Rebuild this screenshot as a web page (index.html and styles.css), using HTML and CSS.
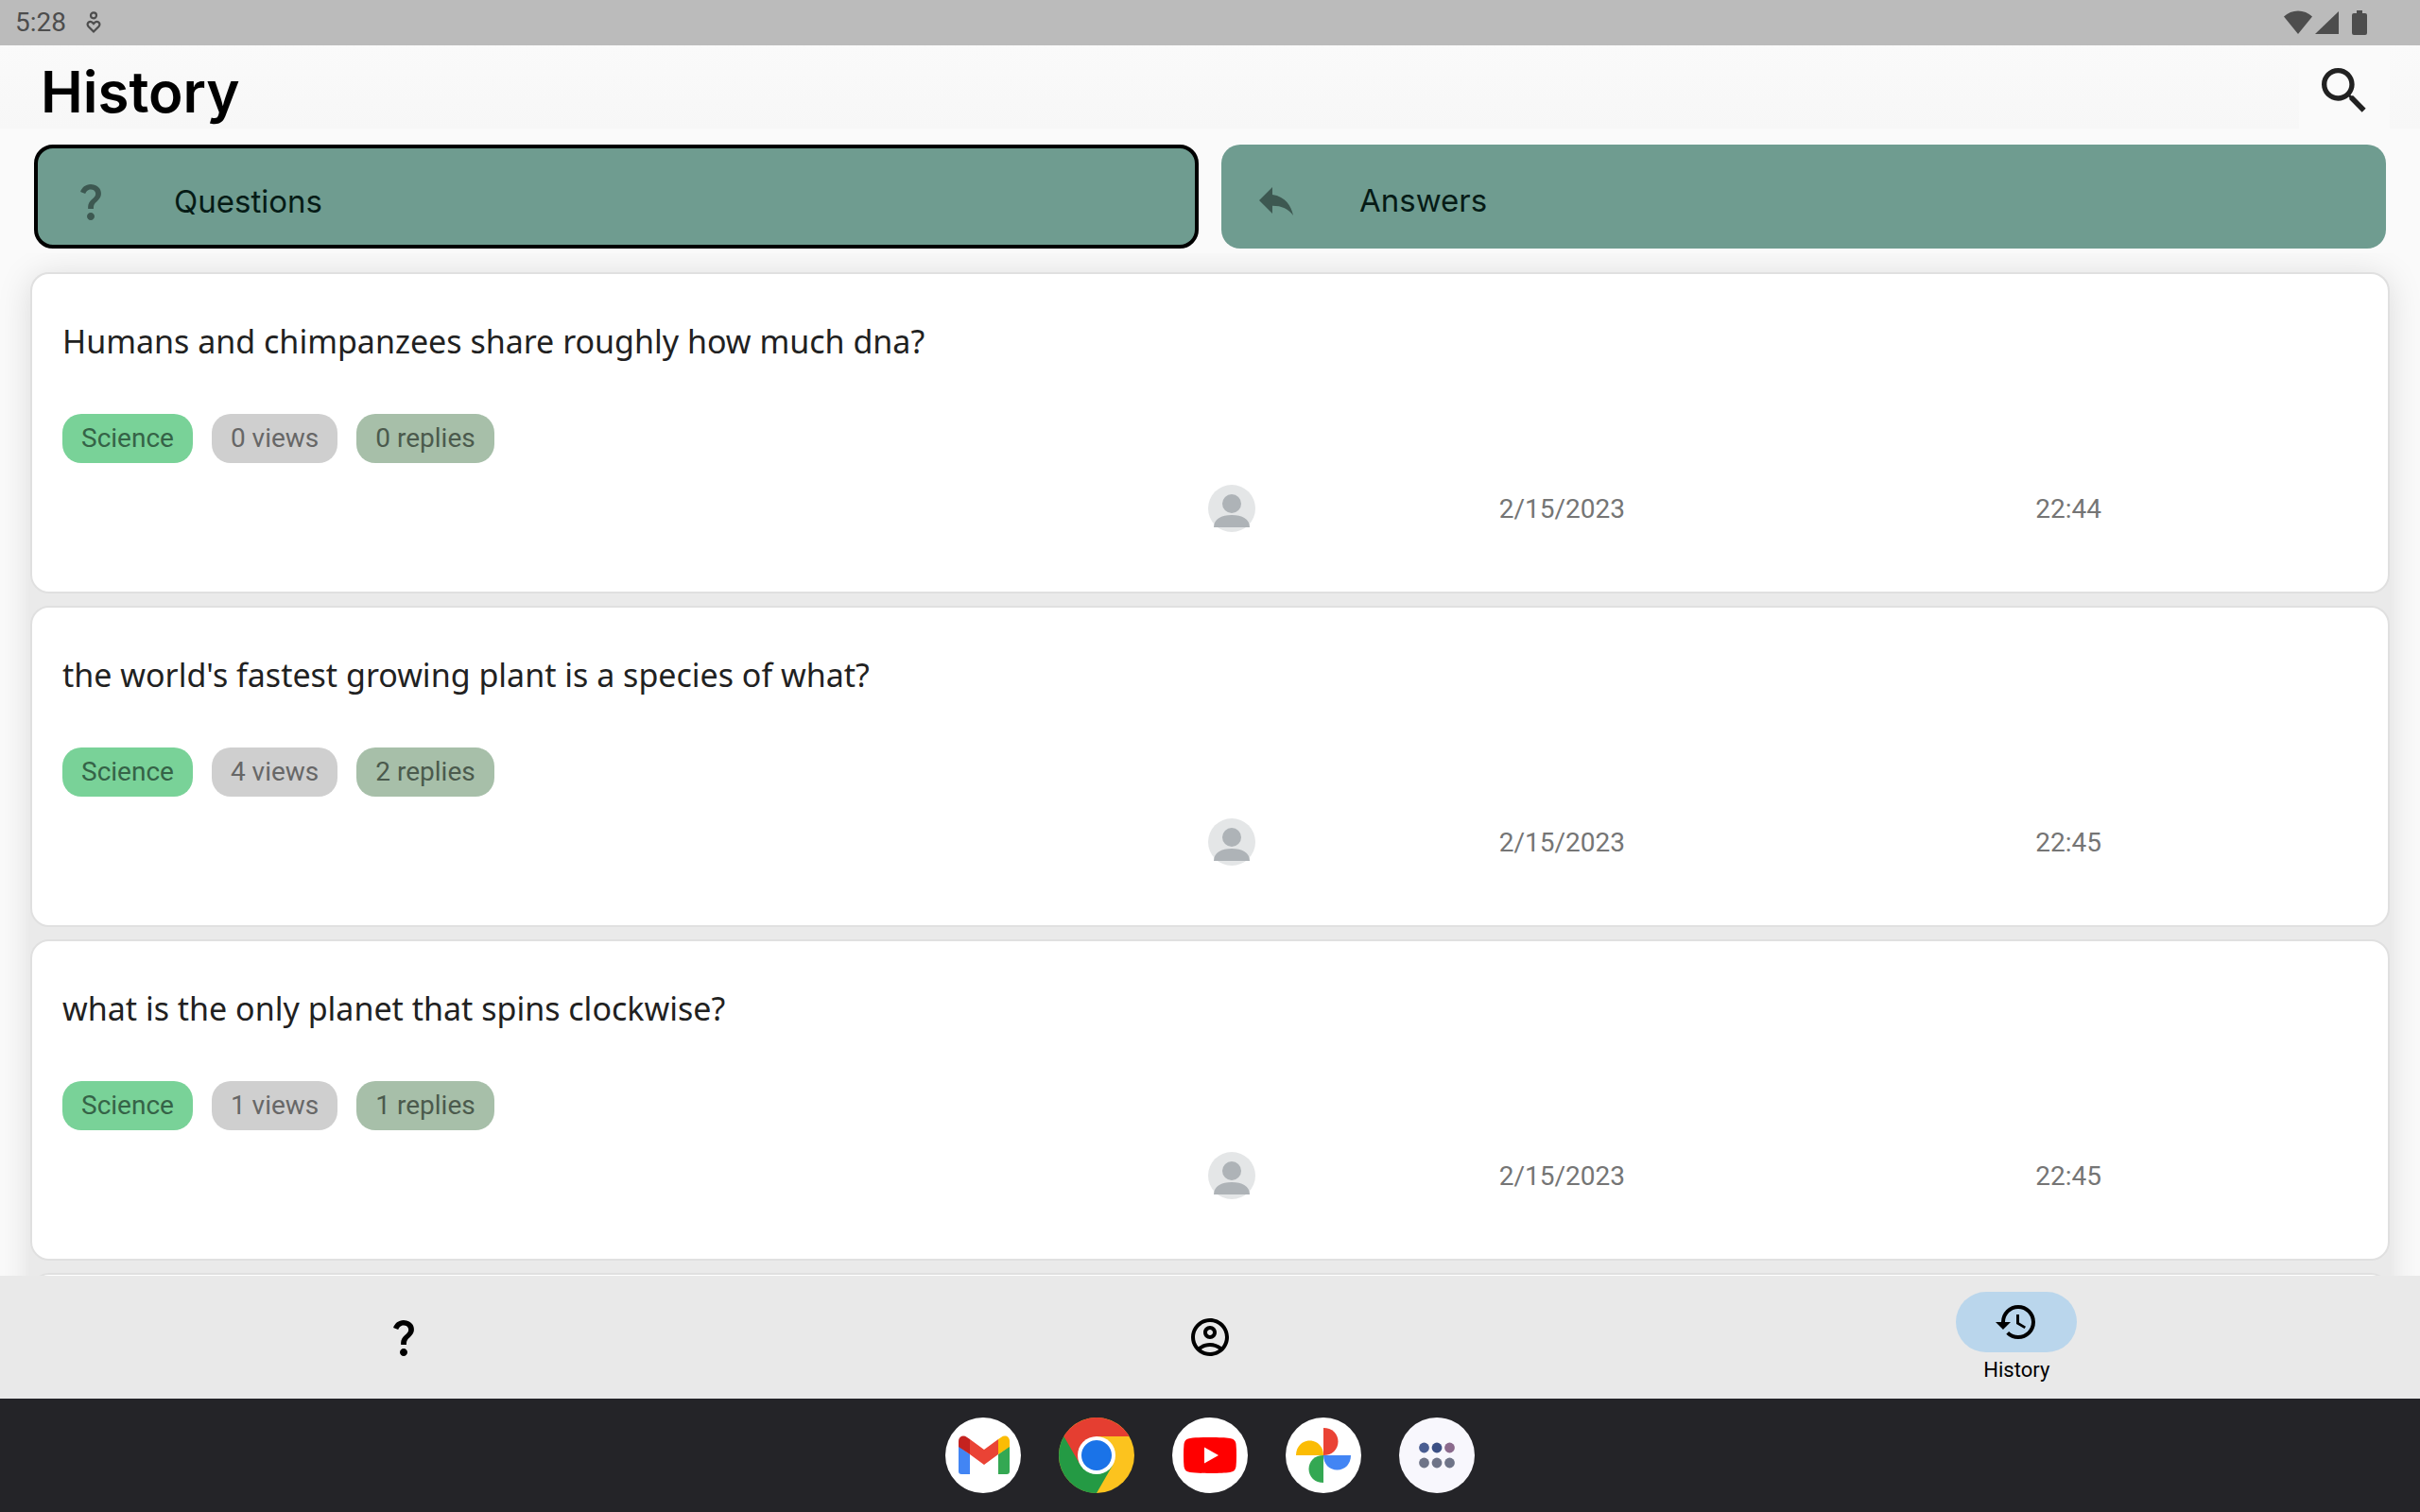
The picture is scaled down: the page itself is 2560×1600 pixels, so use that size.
FILE: index.html
```html
<!DOCTYPE html>
<html lang="en">
<head>
  <meta charset="UTF-8" />
  <meta name="viewport" content="width=device-width, initial-scale=1.0" />
  <title>History</title>
  <link rel="stylesheet" href="styles.css">
</head>
<body>
  <!-- Icons used more than once -->
  <svg class="sprite" aria-hidden="true">
    <symbol id="icon-question" viewBox="0 0 24 24">
      <path d="M11.07 12.85c.77-1.39 2.25-2.21 3.11-3.44.91-1.29.4-3.7-2.18-3.7-1.69 0-2.52 1.28-2.87 2.34L6.54 6.96C7.25 4.83 9.18 3 11.99 3c2.35 0 3.96 1.07 4.78 2.41.7 1.15 1.11 3.3.03 4.9-1.2 1.77-2.35 2.31-2.97 3.45-.25.46-.35.76-.35 2.24h-2.89c-.01-.78-.13-2.05.48-3.15zM14 20c0 1.1-.9 2-2 2s-2-.9-2-2 .9-2 2-2 2 .9 2 2z"/>
    </symbol>
    <symbol id="icon-avatar" viewBox="0 0 50 50">
      <circle cx="25" cy="25" r="25" fill="#e4e6e7"/>
      <circle cx="25" cy="20" r="10" fill="#aeb3b7"/>
      <path d="M6 45c0-9 8-13 19-13s19 4 19 13z" fill="#aeb3b7"/>
    </symbol>
  </svg>

  <div class="status-bar">
    <span class="clock">5:28</span>
    <svg class="status-note" viewBox="0 0 18 24" fill="none" stroke="#4d4d4d" stroke-width="2.2">
      <circle cx="9" cy="4.300" r="3"/>
      <path d="M9 21.500L3.500 16C.5 12.500 5.500 8.500 9 13c3.500-4.500 8.500-.5 5.500 3z"/>
    </svg>
    <div class="status-icons">
      <svg width="30" height="26" viewBox="0 0 30 26"><path d="M0 6.500C8-1.500 22-1.500 30 6.500L15 25z"/></svg>
      <svg width="25" height="26" viewBox="0 0 25 26"><path d="M25 1v24H0z"/></svg>
      <svg class="battery" width="16" height="26" viewBox="0 0 16 26"><path d="M5 0h6v3h3q2 0 2 2v19q0 2-2 2H2q-2 0-2-2V5q0-2 2-2h3z"/></svg>
    </div>
  </div>

  <header class="header">
    <h1>History</h1>
    <button type="button" class="search-btn" aria-label="Search">
      <svg viewBox="0 0 24 24"><path d="M15.500 14h-.79l-.28-.27C15.410 12.590 16 11.110 16 9.500 16 5.910 13.090 3 9.500 3S3 5.910 3 9.500 5.910 16 9.500 16c1.610 0 3.090-.59 4.230-1.570l.27.28v.79l5 4.990L20.490 19l-4.990-5zm-6 0C7.010 14 5 11.990 5 9.500S7.010 5 9.500 5 14 7.010 14 9.500 11.990 14 9.500 14z"/></svg>
    </button>
  </header>

  <div class="tabs">
    <button type="button" class="tab active">
      <svg><use href="#icon-question"/></svg>
      <span>Questions</span>
    </button>
    <button type="button" class="tab">
      <svg viewBox="0 0 24 24"><path d="M10 9V5l-7 7 7 7v-4.100c5 0 8.500 1.600 11 5.100-1-5-4-10-11-11z"/></svg>
      <span>Answers</span>
    </button>
  </div>

  <main class="content">
    <div class="card-list">
      <article class="card">
        <h2>Humans and chimpanzees share roughly how much dna?</h2>
        <div class="chips">
          <span class="chip category">Science</span>
          <span class="chip views">0 views</span>
          <span class="chip replies">0 replies</span>
        </div>
        <div class="meta">
          <svg class="avatar"><use href="#icon-avatar"/></svg>
          <span class="date">2/15/2023</span>
          <span class="time">22:44</span>
        </div>
      </article>

      <article class="card">
        <h2>the world's fastest growing plant is a species of what?</h2>
        <div class="chips">
          <span class="chip category">Science</span>
          <span class="chip views">4 views</span>
          <span class="chip replies">2 replies</span>
        </div>
        <div class="meta">
          <svg class="avatar"><use href="#icon-avatar"/></svg>
          <span class="date">2/15/2023</span>
          <span class="time">22:45</span>
        </div>
      </article>

      <article class="card">
        <h2>what is the only planet that spins clockwise?</h2>
        <div class="chips">
          <span class="chip category">Science</span>
          <span class="chip views">1 views</span>
          <span class="chip replies">1 replies</span>
        </div>
        <div class="meta">
          <svg class="avatar"><use href="#icon-avatar"/></svg>
          <span class="date">2/15/2023</span>
          <span class="time">22:45</span>
        </div>
      </article>

      <article class="card"></article>
    </div>
  </main>

  <nav class="bottom-nav">
    <a href="#questions" aria-label="Questions">
      <svg><use href="#icon-question"/></svg>
    </a>
    <a href="#account" aria-label="Account">
      <svg viewBox="0 0 24 24"><path d="M12 2C6.480 2 2 6.480 2 12s4.480 10 10 10 10-4.480 10-10S17.520 2 12 2zM7.350 18.500C8.660 17.560 10.260 17 12 17s3.340.56 4.650 1.500C15.340 19.440 13.740 20 12 20s-3.340-.56-4.650-1.500zm10.790-1.380C16.450 15.800 14.320 15 12 15s-4.450.8-6.140 2.120C4.700 15.730 4 13.950 4 12c0-4.420 3.580-8 8-8s8 3.580 8 8c0 1.950-.7 3.730-1.860 5.120zM12 6c-1.930 0-3.500 1.570-3.500 3.500S10.070 13 12 13s3.500-1.570 3.500-3.500S13.930 6 12 6zm0 5c-.83 0-1.500-.67-1.500-1.500S11.170 8 12 8s1.500.67 1.500 1.500S12.830 11 12 11z"/></svg>
    </a>
    <a href="#history" class="selected">
      <span class="pill">
        <svg viewBox="0 0 24 24"><path d="M13 3a9 9 0 0 0-9 9H1l3.890 3.890.07.14L9 12H6c0-3.870 3.130-7 7-7s7 3.130 7 7-3.130 7-7 7c-1.930 0-3.680-.79-4.940-2.060l-1.420 1.420A8.950 8.950 0 0 0 13 21a9 9 0 0 0 0-18zm-1 5v5l4.280 2.540.72-1.210-3.500-2.080V8H12z"/></svg>
      </span>
      <span class="label">History</span>
    </a>
  </nav>

  <footer class="dock">
    <button type="button" aria-label="Gmail">
      <svg viewBox="0 0 80 80">
        <circle cx="40" cy="40" r="40" fill="#fff"/>
        <path d="M14 30l12 9v21h-9q-3 0-3-3z" fill="#4285f4"/>
        <path d="M68 30l-12 9v21h9q3 0 3-3z" fill="#34a853"/>
        <path d="M26 23l15 11 15-11v16L41 50 26 39z" fill="#ea4335"/>
        <path d="M14 31v-6c0-5 5-7 9-4l3 2v16z" fill="#c5221f"/>
        <path d="M68 31v-6c0-5-5-7-9-4l-3 2v16z" fill="#fbbc04"/>
      </svg>
    </button>
    <button type="button" aria-label="Chrome">
      <svg viewBox="0 0 80 80">
        <circle cx="40" cy="40" r="40" fill="#fcc31e"/>
        <path d="M40 40L57.300 50 40 80A40 40 0 0 1 5.400 20z" fill="#249a44"/>
        <path d="M40 40L22.700 50 5.400 20A40 40 0 0 1 74.600 20H40z" fill="#e53e31"/>
        <circle cx="40" cy="40" r="20" fill="#fff"/>
        <circle cx="40" cy="40" r="16" fill="#1a73e8"/>
      </svg>
    </button>
    <button type="button" aria-label="YouTube">
      <svg viewBox="0 0 80 80">
        <circle cx="40" cy="40" r="40" fill="#fff"/>
        <path d="M40 21c10 0 16 .3 21 1 4 .5 6 2.500 6.500 6q.5 5 .5 12t-.5 12c-.5 3.500-2.500 5.500-6.500 6-5 .7-11 1-21 1s-16-.3-21-1c-4-.5-6-2.500-6.500-6q-.5-5-.5-12t.5-12c.5-3.500 2.500-5.500 6.500-6 5-.7 11-1 21-1z" fill="#f00"/>
        <path d="M34 31.500v17L49 40z" fill="#fff"/>
      </svg>
    </button>
    <button type="button" aria-label="Photos">
      <svg viewBox="0 0 80 80">
        <circle cx="40" cy="40" r="40" fill="#fff"/>
        <path d="M40 11c9 0 15.500 6 15.500 14.500S49 40 40 40z" fill="#ea4335"/>
        <path d="M69 40c0 9-6 15.500-14.500 15.500S40 49 40 40z" fill="#4285f4"/>
        <path d="M40 69c-9 0-15.500-6-15.500-14.500S31 40 40 40z" fill="#34a853"/>
        <path d="M11 40c0-9 6-15.500 14.500-15.500S40 31 40 40z" fill="#fbbc04"/>
      </svg>
    </button>
    <button type="button" aria-label="All apps">
      <svg viewBox="0 0 80 80">
        <circle cx="40" cy="40" r="40" fill="#f8f7fd"/>
        <circle cx="26.500" cy="32" r="5.400" fill="#495d92"/>
        <circle cx="40" cy="32" r="5.400" fill="#3c5085"/>
        <circle cx="53.500" cy="32" r="5.400" fill="#8b6a8d"/>
        <circle cx="26.500" cy="48" r="5.400" fill="#6f7488"/>
        <circle cx="40" cy="48" r="5.400" fill="#6f7488"/>
        <circle cx="53.500" cy="48" r="5.400" fill="#6f7488"/>
      </svg>
    </button>
  </footer>
</body>
</html>
```
FILE: styles.css
```css
* {
  box-sizing: border-box;
}

body {
  margin: 0;
  height: 100vh;
  display: flex;
  flex-direction: column;
  overflow: hidden;
  background-color: #fafafa;
  color: #212121;
  font-family: Roboto, sans-serif;
}

button {
  border: none;
  padding: 0;
  background: none;
  font: inherit;
  color: inherit;
  cursor: pointer;
}

svg {
  display: block;
}

.sprite {
  position: absolute;
  width: 0;
  height: 0;
}

/* Status bar */
.status-bar {
  display: flex;
  align-items: center;
  height: 48px;
  padding: 0 56px 0 16px;
  background-color: #bbb;
  color: #4d4d4d;
  fill: #4d4d4d;
  font-size: 28px;
  line-height: 48px;
}

.status-note {
  width: 18px;
  height: 24px;
  margin-left: 20px;
}

.status-icons {
  display: flex;
  align-items: center;
  gap: 3px;
  margin-left: auto;
}

.battery {
  margin-left: 11px;
}

/* Header */
.header {
  display: flex;
  justify-content: space-between;
  height: 88px;
  padding: 0 32px 0 43px;
  overflow: hidden;
  background: linear-gradient(#fafafa, #f7f7f7);
}

.header h1 {
  margin: 0;
  color: #000;
  font-family: Inter, sans-serif;
  font-size: 60px;
  font-weight: 600;
  line-height: 98px;
}

.search-btn {
  width: 96px;
  padding: 8px 16px 0;
  background-color: #fafafa;
}

.search-btn svg {
  width: 64px;
  height: 64px;
  fill: #212121;
}

/* Question / answer switch */
.tabs {
  display: grid;
  grid-template-columns: 1fr 1fr;
  gap: 24px;
  padding: 17px 36px 5px;
}

.tab {
  display: flex;
  align-items: center;
  gap: 64px;
  height: 110px;
  padding: 7px 34px 0;
  border-radius: 20px;
  background-color: #6f9c90;
  color: #061b16;
  font-family: Inter, sans-serif;
  font-size: 33px;
  font-weight: 400;
}

.tab.active {
  padding: 10px 32px 0;
  border: 4px solid #000;
}

.tab svg {
  width: 48px;
  height: 48px;
  fill: #3d5851;
}

/* Cards */
.content {
  flex: 1;
  min-height: 0;
  padding: 20px 32px 0;
  overflow: hidden;
}

.card-list {
  display: flex;
  flex-direction: column;
  gap: 13px;
  border-radius: 20px;
  background-color: #eaeaea;
  box-shadow: 0 4px 36px rgba(0, 0, 0, 0.13);
}

.card {
  min-height: 340px;
  padding: 45px 32px 61px;
  border: 2px solid #e0e0e0;
  border-radius: 20px;
  background-color: #fff;
}

.card h2 {
  margin: 0 0 51px;
  font-family: "Noto Sans", sans-serif;
  font-size: 34px;
  font-weight: 400;
  line-height: 52px;
}

.chips {
  display: flex;
  gap: 20px;
  margin-bottom: 23px;
}

.chip {
  padding: 0 20px;
  border-radius: 20px;
  font-size: 28px;
  line-height: 52px;
}

.category {
  background-color: #79d298;
  color: #356347;
}

.views {
  background-color: #cfcfcf;
  color: #676767;
}

.replies {
  background-color: #a7bfa9;
  color: #4b5a4d;
}

.meta {
  display: grid;
  grid-template-columns: 1212fr 107fr 536fr 536fr 38fr;
  align-items: center;
  color: #757575;
  font-size: 28px;
  text-align: center;
}

.avatar {
  grid-column: 2;
  width: 50px;
  height: 50px;
}

/* Bottom navigation */
.bottom-nav {
  display: grid;
  grid-template-columns: repeat(3, 1fr);
  height: 130px;
  background-color: #e9e9e9;
}

.bottom-nav a {
  display: flex;
  flex-direction: column;
  align-items: center;
  justify-content: center;
  color: #000;
  text-decoration: none;
}

.bottom-nav svg {
  width: 48px;
  height: 48px;
}

.pill {
  padding: 8px 40px;
  border-radius: 32px;
  background-color: #bad6ec;
}

.label {
  margin-top: 5px;
  font-size: 22px;
  line-height: 28px;
}

/* Dock */
.dock {
  display: flex;
  align-items: center;
  justify-content: center;
  gap: 40px;
  height: 120px;
  background-color: #242428;
}

.dock svg {
  width: 80px;
  height: 80px;
}
```
